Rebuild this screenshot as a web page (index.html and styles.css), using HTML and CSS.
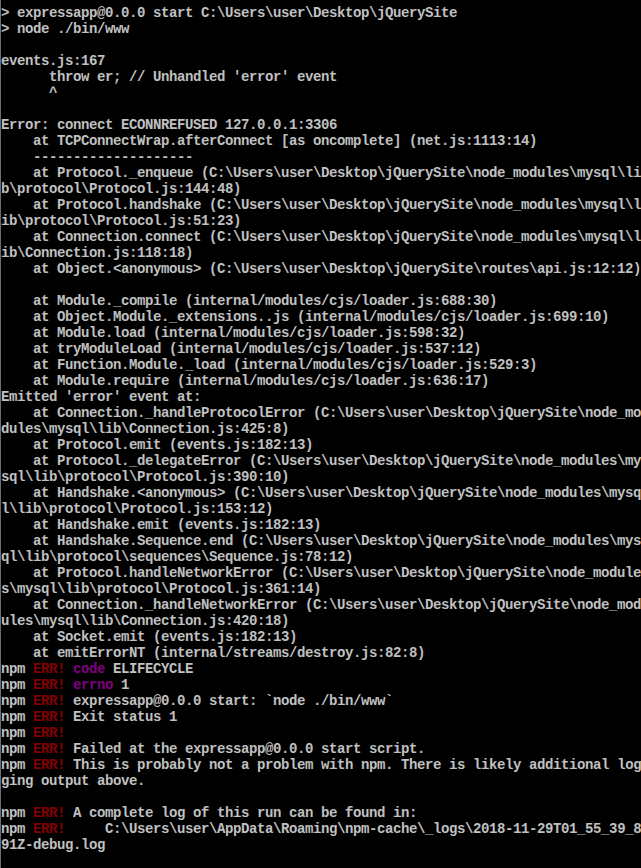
FILE: index.html
```html
<!DOCTYPE html>
<html lang="en">
<head>
<meta charset="utf-8">
<title>Command Prompt</title>
<link rel="stylesheet" href="styles.css">
</head>
<body>
<main class="console">
<pre class="output">&gt; expressapp@0.0.0 start C:\Users\user\Desktop\jQuerySite
&gt; node ./bin/www

events.js:167
      throw er; // Unhandled 'error' event
      ^

Error: connect ECONNREFUSED 127.0.0.1:3306
    at TCPConnectWrap.afterConnect [as oncomplete] (net.js:1113:14)
    --------------------
    at Protocol._enqueue (C:\Users\user\Desktop\jQuerySite\node_modules\mysql\li
b\protocol\Protocol.js:144:48)
    at Protocol.handshake (C:\Users\user\Desktop\jQuerySite\node_modules\mysql\l
ib\protocol\Protocol.js:51:23)
    at Connection.connect (C:\Users\user\Desktop\jQuerySite\node_modules\mysql\l
ib\Connection.js:118:18)
    at Object.&lt;anonymous&gt; (C:\Users\user\Desktop\jQuerySite\routes\api.js:12:12)

    at Module._compile (internal/modules/cjs/loader.js:688:30)
    at Object.Module._extensions..js (internal/modules/cjs/loader.js:699:10)
    at Module.load (internal/modules/cjs/loader.js:598:32)
    at tryModuleLoad (internal/modules/cjs/loader.js:537:12)
    at Function.Module._load (internal/modules/cjs/loader.js:529:3)
    at Module.require (internal/modules/cjs/loader.js:636:17)
Emitted 'error' event at:
    at Connection._handleProtocolError (C:\Users\user\Desktop\jQuerySite\node_mo
dules\mysql\lib\Connection.js:425:8)
    at Protocol.emit (events.js:182:13)
    at Protocol._delegateError (C:\Users\user\Desktop\jQuerySite\node_modules\my
sql\lib\protocol\Protocol.js:390:10)
    at Handshake.&lt;anonymous&gt; (C:\Users\user\Desktop\jQuerySite\node_modules\mysq
l\lib\protocol\Protocol.js:153:12)
    at Handshake.emit (events.js:182:13)
    at Handshake.Sequence.end (C:\Users\user\Desktop\jQuerySite\node_modules\mys
ql\lib\protocol\sequences\Sequence.js:78:12)
    at Protocol.handleNetworkError (C:\Users\user\Desktop\jQuerySite\node_module
s\mysql\lib\protocol\Protocol.js:361:14)
    at Connection._handleNetworkError (C:\Users\user\Desktop\jQuerySite\node_mod
ules\mysql\lib\Connection.js:420:18)
    at Socket.emit (events.js:182:13)
    at emitErrorNT (internal/streams/destroy.js:82:8)
npm <span class="err">ERR!</span> <span class="key">code</span> ELIFECYCLE
npm <span class="err">ERR!</span> <span class="key">errno</span> 1
npm <span class="err">ERR!</span> expressapp@0.0.0 start: `node ./bin/www`
npm <span class="err">ERR!</span> Exit status 1
npm <span class="err">ERR!</span>
npm <span class="err">ERR!</span> Failed at the expressapp@0.0.0 start script.
npm <span class="err">ERR!</span> This is probably not a problem with npm. There is likely additional log
ging output above.

npm <span class="err">ERR!</span> A complete log of this run can be found in:
npm <span class="err">ERR!</span>     C:\Users\user\AppData\Roaming\npm-cache\_logs\2018-11-29T01_55_39_8
91Z-debug.log</pre>
</main>
</body>
</html>
```

FILE: styles.css
```css
html, body {
  margin: 0;
  padding: 0;
  background: #000000;
  height: 100%;
  overflow: hidden;
}

.console {
  box-sizing: border-box;
  height: 100%;
  border-left: 1px solid #6e6e6e;
  background: #000000;
  padding: 5px 0 0 0;
}

.output {
  margin: 0;
  font-family: "Liberation Mono", "DejaVu Sans Mono", monospace;
  font-weight: bold;
  font-size: 14px;
  letter-spacing: -0.4px;
  line-height: 16px;
  color: #c0c0c0;
  white-space: pre;
}

.err {
  color: #800000;
}

.key {
  color: #800080;
}
```
